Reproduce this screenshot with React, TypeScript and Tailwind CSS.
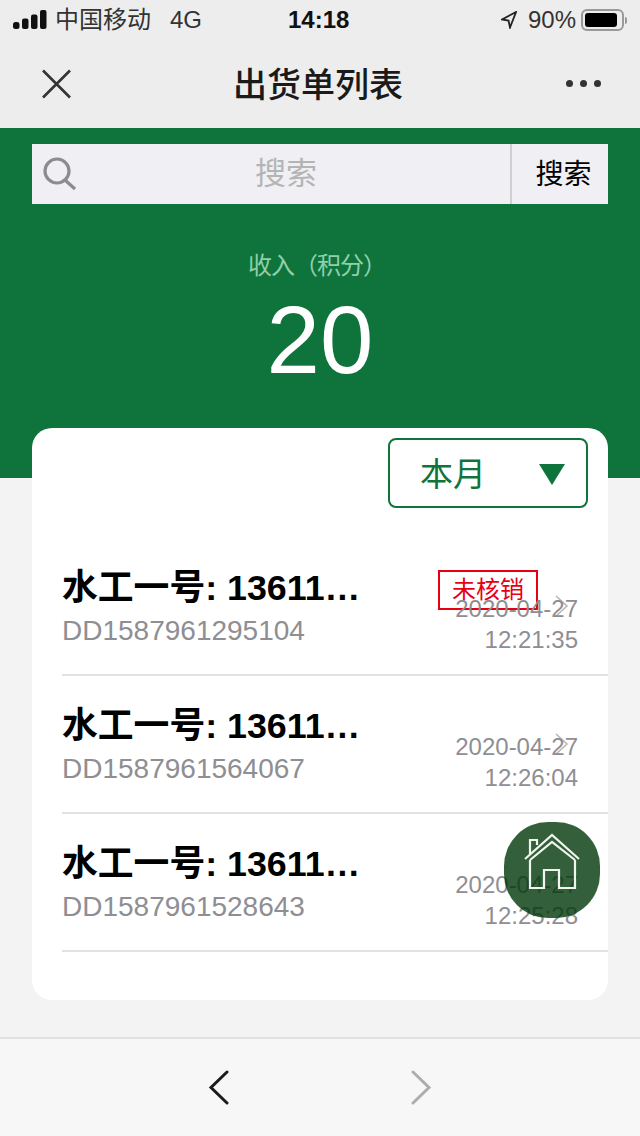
const sans = "font-['Liberation_Sans','Noto_Sans_CJK_SC',sans-serif]";

function Row({ id, d, t, tag, arrow }: { id: string; d: string; t: string; tag?: boolean; arrow?: boolean }) {
  return (
    <div className="relative h-[138px] ml-[30px] border-b-2 border-[#e2e2e2]">
      <div className="pt-[28px] text-[35.8px] leading-[44px] font-bold text-black whitespace-nowrap">水工一号: 13611…</div>
      <div className="text-[28px] leading-[32px] text-[#8e8e93] mt-[5px]">{id}</div>
      {tag && (
        <div className="absolute left-[376px] top-[32px] w-[100px] h-[40px] border-2 border-[#e60012] text-[#e60012] text-[24px] leading-[36px] text-center">未核销</div>
      )}
      {arrow && (
        <svg className="absolute left-[492px] top-[56px]" width="18" height="24" viewBox="0 0 18 24" fill="none" stroke="#b5b5b5" strokeWidth="1.5">
          <path d="M2 2l11 10L2 22" />
        </svg>
      )}
      <div className="absolute right-[30px] top-[56px] text-[24px] leading-[30px] text-[#8e8e93] text-right">
        <div>{d}</div>
        <div className="mt-[1px]">{t}</div>
      </div>
    </div>
  );
}

export default function App() {
  return (
    <div className={`w-[640px] h-[1136px] bg-[#f3f3f3] flex flex-col overflow-hidden ${sans}`}>
      <div className="h-[128px] bg-[#ededed] shrink-0">
        <div className="h-[40px] relative flex items-center pl-[13px] pr-[13px] text-[24px] text-[#1a1a1a]">
          <svg width="36" height="20" viewBox="0 0 36 20" fill="#111"><rect x="0" y="12" width="6.5" height="7" rx="2.5" /><rect x="9" y="8.5" width="6.5" height="10.5" rx="2" /><rect x="18" y="4.5" width="6.5" height="14.5" rx="2" /><rect x="27" y="0" width="6.5" height="19" rx="2" /></svg>
          <span className="ml-[6px] text-[#333]">中国移动</span>
          <span className="ml-[19px] text-[#333]">4G</span>
          <span className="absolute left-[288px] font-bold text-[24px] text-[#111]">14:18</span>
          <div className="ml-auto flex items-center">
            <svg width="16" height="18" viewBox="0 0 16 18" fill="none" stroke="#222" strokeWidth="1.8"><path d="M15 1L1 8.5l6.5 1 1.5 7L15 1z" /></svg>
            <span className="ml-[11px] text-[#333]">90%</span>
            <div className="ml-[5px] w-[43px] h-[22px] border-2 border-[#999] rounded-[6px] p-[2px]"><div className="w-[90%] h-full bg-black rounded-[3px]" /></div>
            <div className="w-[2px] h-[7px] bg-[#999] ml-[1px] rounded-r" />
          </div>
        </div>
        <div className="relative h-[88px] flex items-center justify-center">
          <svg className="absolute left-[41px] top-[29px]" width="32" height="30" viewBox="0 0 32 30" stroke="#333" strokeWidth="2.6" fill="none"><path d="M2 1.5l27 27M29 1.5l-27 27" /></svg>
          <span className="text-[34px] font-medium text-[#1a1a1a] mr-[4px] mt-[2px]">出货单列表</span>
          <div className="absolute left-[566px] top-[40px] flex gap-[7px]">
            <span className="w-[7px] h-[7px] rounded-full bg-[#333]" />
            <span className="w-[7px] h-[7px] rounded-full bg-[#333]" />
            <span className="w-[7px] h-[7px] rounded-full bg-[#333]" />
          </div>
        </div>
      </div>
      <div className="h-[350px] bg-[#0f743c] shrink-0 pt-[16px] px-[32px]">
        <div className="h-[60px] bg-[#efeff4] flex items-center">
          <div className="relative flex-1 h-full flex items-center justify-center text-[31px] text-[#b4b4b4]">
            <svg className="absolute left-[10px] top-[12px]" width="36" height="36" viewBox="0 0 36 36" fill="none" stroke="#8c8c8c" strokeWidth="3.2"><circle cx="15" cy="15" r="12" /><path d="M23.5 24.5L33 33" /></svg>
            <span className="ml-[30px] mt-[1px]">搜索</span>
          </div>
          <div className="w-[98px] h-full border-l-2 border-[#cfcfd2] flex items-center justify-center text-[28px] text-black"><span className="mt-[1px] ml-[7px]">搜索</span></div>
        </div>
        <div className="text-center text-[24px] leading-[32px] text-[#8fd0ab] tracking-[-1px] mt-[46px] mr-[6px]">收入（积分）</div>
        <div className="text-center text-[96px] leading-[96px] text-white mt-[10px]">20</div>
      </div>
      <div className="mx-[32px] mt-[-50px] h-[572px] bg-white rounded-[20px] shrink-0 relative z-10">
        <div className="flex justify-end pr-[20px] pt-[10px]">
          <div className="w-[200px] h-[70px] border-2 border-[#0f743c] rounded-[8px] flex items-center pl-[30px] text-[33px] text-[#0f743c]">
            <span className="mt-[3px]">本月</span>
            <svg className="ml-[53px] mt-[2px]" width="26" height="21" viewBox="0 0 26 21" fill="#0f743c"><path d="M0 0h26L13 21z" /></svg>
          </div>
        </div>
        <div className="mt-[30px]">
          <Row id="DD1587961295104" d="2020-04-27" t="12:21:35" tag arrow />
          <Row id="DD1587961564067" d="2020-04-27" t="12:26:04" arrow />
          <Row id="DD1587961528643" d="2020-04-27" t="12:25:28" />
        </div>
        <div className="absolute left-[472px] top-[394px] w-[96px] h-[96px] bg-[#003809]/80 rounded-[44px] flex justify-center pt-[10px]">
          <svg width="56" height="60" viewBox="0 0 56 60" fill="none" stroke="#f1f5ee" strokeWidth="2.2">
            <path d="M1 27L28 3l27 24" />
            <path d="M6 28L28 10l23 18" />
            <path d="M6 28V56H20V38H35V56H51V28" />
            <path d="M6 22V8H13V13" />
          </svg>
        </div>
      </div>
      <div className="mt-auto h-[99px] bg-[#f7f7f7] border-t-2 border-[#e0e0e0] relative">
        <svg className="absolute left-[208px] top-[31px]" width="22" height="36" viewBox="0 0 22 36" fill="none" stroke="#1c1c1c" strokeWidth="3" strokeLinecap="round"><path d="M19 2L3 17.5 19 33" /></svg>
        <svg className="absolute left-[410px] top-[31px]" width="22" height="36" viewBox="0 0 22 36" fill="none" stroke="#adadad" strokeWidth="3" strokeLinecap="round"><path d="M3 2l16 15.5L3 33" /></svg>
      </div>
    </div>
  );
}
